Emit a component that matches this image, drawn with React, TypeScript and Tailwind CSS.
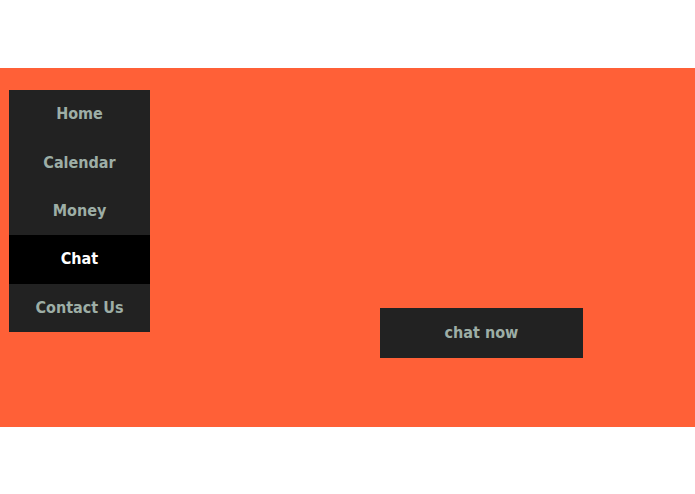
const items = ["Home", "Calendar", "Money", "Chat", "Contact Us"];

export default function App() {
  return (
    <div
      className="w-[695px] h-[494px] bg-white"
      style={{ fontFamily: '"DejaVu Sans Condensed", "DejaVu Sans", sans-serif' }}
    >
      <div className="h-[68px]" />
      <div className="h-[359px] bg-[#ff6037] flex pt-[22px]">
        {/* Side menu */}
        <nav className="ml-[9px] w-[141px] self-start bg-[#222222] flex flex-col">
          {items.map((item) => (
            <a
              key={item}
              className={
                item === "Chat"
                  ? "h-[48.4px] flex items-center justify-center text-[16px] font-bold text-white bg-black"
                  : "h-[48.4px] flex items-center justify-center text-[16px] font-bold text-[#9daea6]"
              }
            >
              {item}
            </a>
          ))}
        </nav>

        {/* Main */}
        <div className="flex-1 pl-[230px] pt-[218px]">
          <button className="w-[203px] h-[50px] bg-[#222222] text-[16px] font-bold text-[#9daea6]">
            chat now
          </button>
        </div>
      </div>
    </div>
  );
}
